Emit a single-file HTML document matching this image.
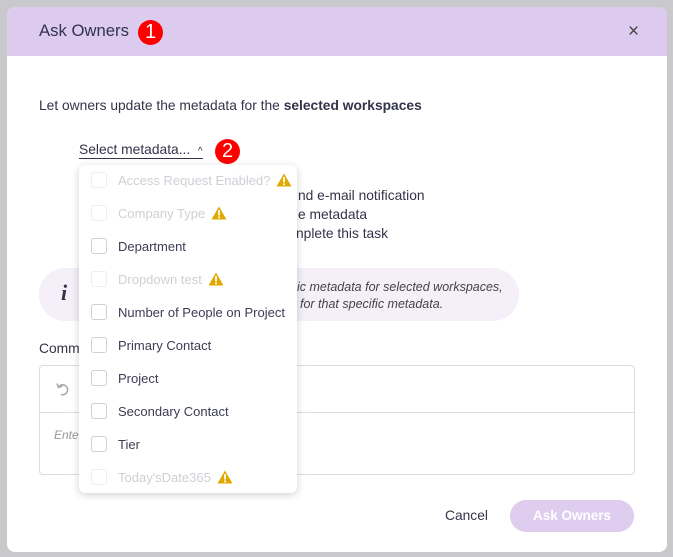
<!DOCTYPE html>
<html><head><meta charset="utf-8"><style>
*{box-sizing:border-box;margin:0;padding:0}
body{width:673px;height:557px;overflow:hidden;background:#c9c9cb;font-family:"Liberation Sans",sans-serif;position:relative;color:#33334a}
.abs{position:absolute}
.modal{left:7px;top:7px;width:660px;height:545px;background:#fff;border-radius:8px;overflow:hidden}
.hdr{left:0;top:0;width:660px;height:49px;background:#dccbee}
.badge{width:25px;height:25px;border-radius:50%;background:#f00;color:#fff;font-size:20px;text-align:center;line-height:25px}
.dd{left:79px;top:165px;width:218px;height:328px;background:#fff;border-radius:6px;box-shadow:0 2px 8px rgba(0,0,0,.18)}
.it{position:absolute;left:12px;height:20px;font-size:13px;line-height:20px;color:#3c3c55;white-space:nowrap}
.it .cb{display:inline-block;width:16px;height:16px;border:1px solid #cfcfd6;border-radius:3px;vertical-align:-3px;margin-right:11px;background:#fff}
.it.dis{color:#cfcfd6}.it.dis .cb{border-color:#efeff2}
.warn{display:inline-block;vertical-align:-2px;margin-left:6px}
.ln{position:absolute;font-size:13.8px;white-space:nowrap}
</style></head><body>
<div class="abs modal">
 <div class="abs hdr"></div>
 <div class="abs" style="left:32px;top:14px;font-size:16.7px;color:#33334a">Ask Owners</div>
 <div class="abs badge" style="left:131px;top:13px">1</div>
 <div class="abs" style="left:621px;top:14px;font-size:19px;color:#444">×</div>
 <div class="ln" style="left:32px;top:91px">Let owners update the metadata for the <b>selected workspaces</b></div>
 <div class="abs" style="left:72px;top:135px;font-size:13.8px;border-bottom:1px solid #33334a;padding-bottom:1px;white-space:nowrap">Select metadata... &nbsp;<span style="font-size:10px">^</span></div>
 <div class="abs badge" style="left:208px;top:132px">2</div>
 <div class="abs" style="left:72px;top:182px;font-size:13px;line-height:19.5px">•<br>•<br>•</div>
 <div class="ln" style="left:291px;top:181px">nd e-mail notification</div>
 <div class="ln" style="left:291px;top:200px">e metadata</div>
 <div class="ln" style="left:289px;top:219px">nplete this task</div>
 <div class="abs" style="left:32px;top:261px;width:480px;height:53px;background:#f4eff9;border-radius:27px"></div>
 <div class="abs" style="left:54px;top:273px;font-family:'Liberation Serif',serif;font-style:italic;font-weight:bold;font-size:22px;color:#33334a">i</div>
 <div class="abs" style="left:290px;top:272px;font-size:12.5px;font-style:italic;line-height:17px;color:#444;white-space:nowrap">ic metadata for selected workspaces,</div>
 <div class="abs" style="left:293px;top:289px;font-size:12.5px;font-style:italic;line-height:17px;color:#444;white-space:nowrap">for that specific metadata.</div>
 <div class="ln" style="left:32px;top:334px">Comm</div>
 <div class="abs" style="left:32px;top:358px;width:596px;height:110px;border:1px solid #dcdce0;border-radius:4px"></div>
 <div class="abs" style="left:32px;top:405px;width:596px;height:1px;background:#dcdce0"></div>
 <svg class="abs" style="left:48px;top:374px" width="16" height="16" viewBox="0 0 16 16"><path d="M3.5 6 A5 5 0 1 1 6 13.5" fill="none" stroke="#aaa" stroke-width="1.6"/><path d="M2 2.5 L3.5 6.5 L7.5 5" fill="none" stroke="#aaa" stroke-width="1.6"/></svg>
 <div class="abs" style="left:47px;top:421px;font-size:12px;font-style:italic;color:#999">Ente</div>
 <div class="ln" style="left:438px;top:501px;color:#33334a">Cancel</div>
 <div class="abs" style="left:503px;top:493px;width:124px;height:32px;background:#dfcdf0;border-radius:16px;color:#fff;font-weight:bold;font-size:13.5px;text-align:center;line-height:32px">Ask Owners</div>
</div>
<div class="abs dd">
 <div class="it dis" style="top:6px"><span class="cb"></span>Access Request Enabled?<svg class="warn" width="16" height="14" viewBox="0 0 16 14"><path d="M8 0.5 L15.5 13.5 H0.5 Z" fill="#e1a800"/><rect x="7.1" y="4" width="1.8" height="5.5" fill="#fff"/><rect x="7.1" y="10.5" width="1.8" height="1.8" fill="#fff"/></svg></div>
 <div class="it dis" style="top:39px"><span class="cb"></span>Company Type<svg class="warn" width="16" height="14" viewBox="0 0 16 14"><path d="M8 0.5 L15.5 13.5 H0.5 Z" fill="#e1a800"/><rect x="7.1" y="4" width="1.8" height="5.5" fill="#fff"/><rect x="7.1" y="10.5" width="1.8" height="1.8" fill="#fff"/></svg></div>
 <div class="it" style="top:72px"><span class="cb"></span>Department</div>
 <div class="it dis" style="top:105px"><span class="cb"></span>Dropdown test<svg class="warn" width="16" height="14" viewBox="0 0 16 14"><path d="M8 0.5 L15.5 13.5 H0.5 Z" fill="#e1a800"/><rect x="7.1" y="4" width="1.8" height="5.5" fill="#fff"/><rect x="7.1" y="10.5" width="1.8" height="1.8" fill="#fff"/></svg></div>
 <div class="it" style="top:138px"><span class="cb"></span>Number of People on Project</div>
 <div class="it" style="top:171px"><span class="cb"></span>Primary Contact</div>
 <div class="it" style="top:204px"><span class="cb"></span>Project</div>
 <div class="it" style="top:237px"><span class="cb"></span>Secondary Contact</div>
 <div class="it" style="top:270px"><span class="cb"></span>Tier</div>
 <div class="it dis" style="top:303px"><span class="cb"></span>Today'sDate365<svg class="warn" width="16" height="14" viewBox="0 0 16 14"><path d="M8 0.5 L15.5 13.5 H0.5 Z" fill="#e1a800"/><rect x="7.1" y="4" width="1.8" height="5.5" fill="#fff"/><rect x="7.1" y="10.5" width="1.8" height="1.8" fill="#fff"/></svg></div>
</div>
</body></html>
